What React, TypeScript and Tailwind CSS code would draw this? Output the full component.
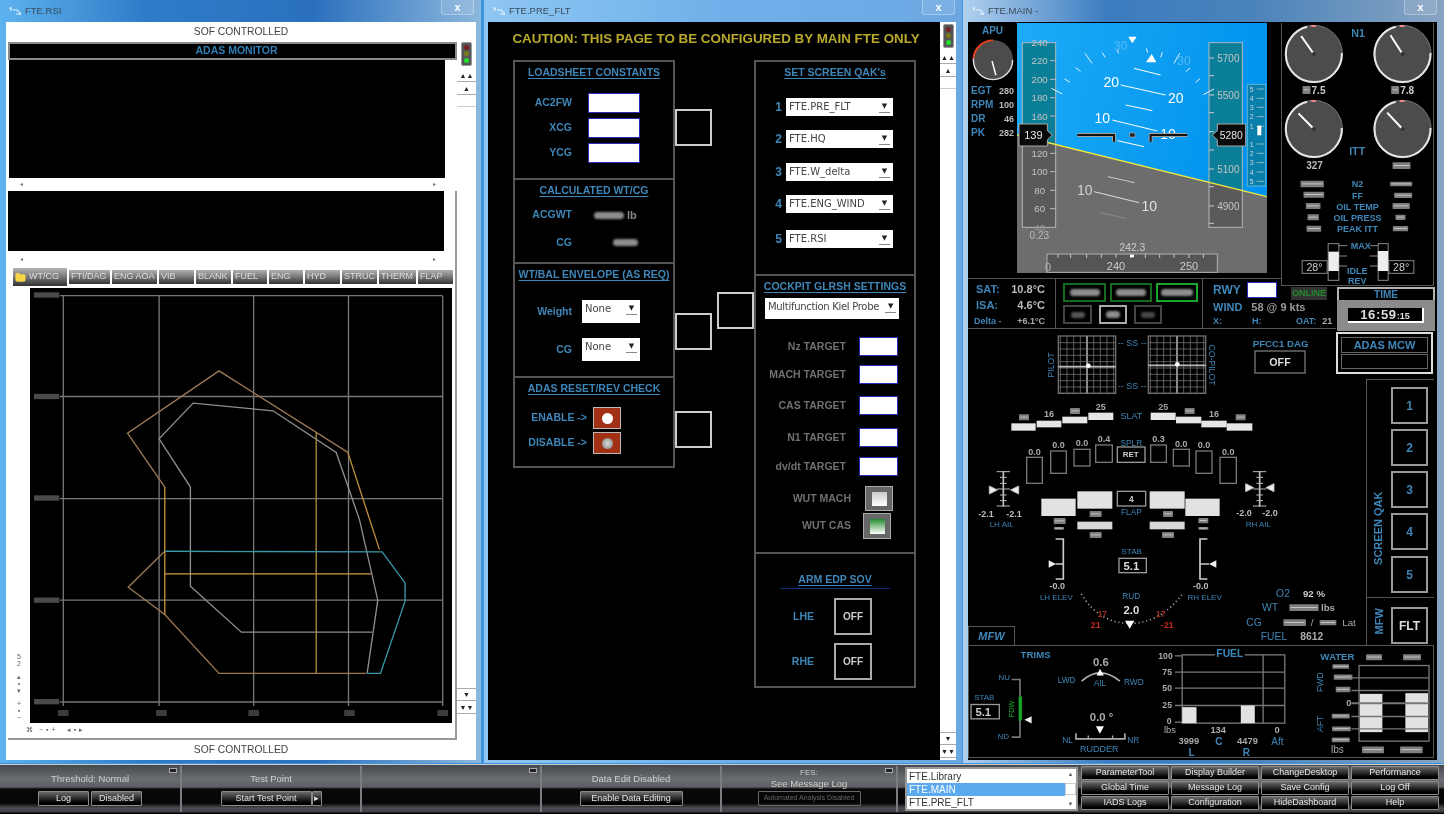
import { Folder } from "lucide-react";
import type { ReactNode } from "react";

const BLUE = "#3f86b8";

// text inside the instrument drawings, sizes are in the drawing's own units
const T = ({ x, y, s = 27, c = BLUE, a = "middle", b = false, r, children }: { x: number; y: number; s?: number; c?: string; a?: "start" | "middle" | "end"; b?: boolean; r?: number; children: ReactNode }) => (
  <text
    x={x}
    y={y}
    fontSize={s}
    fill={c}
    textAnchor={a}
    dominantBaseline="central"
    fontWeight={b ? 700 : 400}
    transform={r ? `rotate(${r} ${x} ${y})` : undefined}
  >
    {children}
  </text>
);

// the reference has these values smeared out
const Sm = ({ x, y, w = 60, h = 20, c = "#7e7e7e" }: { x: number; y: number; w?: number; h?: number; c?: string }) => (
  <g className="blur-[1.5px]">
    <rect x={x - w / 2} y={y - h / 2} width={w} height={h} rx={2} fill={c} />
    <rect x={x - w / 2 + 4} y={y - 2} width={w - 8} height={3} fill="#c4c4c4" />
  </g>
);

const Smudge = ({ className }: { className: string }) => <div className={`rounded-sm bg-[#8e8e8e] blur-[1px] ${className}`} />;

const Tri = ({ x, y, dir, s = 12 }: { x: number; y: number; dir: "l" | "r" | "d" | "u"; s?: number }) => {
  const pts = {
    r: `${x - s},${y - s} ${x + s},${y} ${x - s},${y + s}`,
    l: `${x + s},${y - s} ${x - s},${y} ${x + s},${y + s}`,
    d: `${x - s},${y - s} ${x + s},${y - s} ${x},${y + s}`,
    u: `${x - s},${y + s} ${x + s},${y + s} ${x},${y - s}`,
  }[dir];
  return <polygon points={pts} fill="#eee" />;
};

const WinIcon = () => (
  <svg viewBox="0 0 14 10" className="h-[10px] w-[14px] shrink-0" fill="none" stroke="#e8f2fb" strokeWidth="1.2">
    <path d="M1 2h3M3 2v3M5 4h4l2 2M8 8h5M12 6v3" />
  </svg>
);

const Win = ({ title, bar, width, children, pad }: { title: string; bar: string; width: string; pad: string; children: ReactNode }) => (
  <div className={`flex h-[763px] flex-col ${width} ${bar}`}>
    <div className="flex h-[22px] shrink-0 items-center pl-[8px] pr-[7px]">
      <WinIcon />
      <span className="ml-[3px] text-[9.5px] text-[#3a4a5a]">{title}</span>
      <div className="ml-auto flex h-[15px] w-[33px] items-center justify-center self-start rounded-b-[3px] border border-t-0 border-white/30 bg-white/10 text-[11px] font-bold leading-none text-white">
        x
      </div>
    </div>
    <div className={`flex h-[738px] ${pad}`}>{children}</div>
  </div>
);

const Light = () => (
  <div className="flex h-[24px] w-[11px] flex-col items-center justify-around rounded-[2px] border border-[#999] bg-[#555] py-px">
    <div className="h-[5px] w-[5px] rounded-full bg-[#7a1f1f]" />
    <div className="h-[5px] w-[5px] rounded-full bg-[#7a7a1a]" />
    <div className="h-[5px] w-[5px] rounded-full bg-[#22e02a]" />
  </div>
);

const Cap = ({ children, border = "border-b" }: { children: string; border?: string }) => (
  <div className={`flex h-[13px] w-full items-center justify-center border-[#aaa] text-[7px] leading-none text-[#222] ${border}`}>{children}</div>
);

const Scroll = ({ pt }: { pt: string }) => (
  <div className={`flex flex-1 flex-col items-center bg-white ${pt}`}>
    <Light />
    <div className="mt-[3px] w-full">
      <Cap>▲▲</Cap>
      <Cap>▲</Cap>
      <div className="h-[12px] border-b border-[#ccc]" />
    </div>
  </div>
);

const ScrollEnd = ({ className }: { className: string }) => (
  <div className={`w-full bg-white ${className}`}>
    <Cap border="border-y">▼</Cap>
    <Cap>▼▼</Cap>
  </div>
);

const TABS = [
  ["FTI/DAG", "w-[41px]"],
  ["ENG AOA", "w-[45px]"],
  ["VIB", "w-[35px]"],
  ["BLANK", "w-[35px]"],
  ["FUEL", "w-[34px]"],
  ["ENG", "w-[34px]"],
  ["HYD", "w-[35px]"],
  ["STRUC", "w-[35px]"],
  ["THERM", "w-[37px]"],
  ["FLAP", "w-[35px]"],
];

const EnvelopeChart = () => (
  <svg viewBox="90 85 1268 1305" className="h-[435px] w-[422px] bg-black" fill="none" strokeWidth="4">
    <g stroke="#777">
      {[190, 478, 762, 1047, 1330].map((x) => (
        <line key={x} x1={x} y1={107} x2={x} y2={1340} />
      ))}
      {[107, 410, 717, 1022, 1328].map((y) => (
        <line key={y} x1={180} y1={y} x2={1330} y2={y} />
      ))}
    </g>
    <polyline stroke="#8f8f8f" points="1103,1242 1135,1022 1080,780 1010,578 820,453 580,430 478,537 572,682 572,980 725,1118 1118,1118" />
    <polyline stroke="#9b7a52" points="1100,1242 658,1242 495,1065 385,983 495,875" />
    <polyline stroke="#9b7a52" points="495,682 383,520 658,333 1045,578" />
    <polyline stroke="#c08d3e" points="1045,578 1140,870" />
    <line stroke="#c79440" x1={495} y1={682} x2={495} y2={1065} />
    <line stroke="#d09a45" x1={495} y1={943} x2={1115} y2={943} />
    <line stroke="#a98c42" x1={950} y1={520} x2={950} y2={1242} />
    <polyline stroke="#3a97a8" points="495,875 1148,877 1217,970 1217,1025 1143,1242 1103,1242" />
    {[105, 410, 715, 1022, 1327].map((y) => (
      <rect key={y} x={102} y={y - 8} width={76} height={16} fill="#4a4a4a" className="blur-[2px]" />
    ))}
    {[190, 485, 762, 1050, 1330].map((x) => (
      <rect key={x} x={x - 16} y={1352} width={32} height={18} fill="#3c3c3c" className="blur-[2px]" />
    ))}
  </svg>
);

const RsiWindow = () => (
  <div className="flex w-full flex-col bg-white">
    <div className="flex h-[18px] items-center justify-center pt-px text-[10.3px] text-[#444]">SOF CONTROLLED</div>
    <div className="flex h-[700px]">
      <div className="ml-[2px] flex w-[449px] flex-col">
        <div className="mt-[2px] flex h-[18px] items-center justify-center border-2 border-[#8a8a8a] bg-black pl-[8px] text-[10.5px] font-bold text-[#2f7fb5]">ADAS MONITOR</div>
        <div className="ml-px h-[118px] w-[436px] bg-black" />
        <div className="flex h-[13px] w-[440px] items-center justify-between px-[12px] text-[6px] text-[#777]">
          <span>◂</span>
          <span>▸</span>
        </div>
        <div className="flex h-[549px] flex-col border-b-2 border-r-2 border-[#999]">
          <div className="h-[60px] w-[436px] bg-black" />
          <div className="flex h-[17px] w-[440px] items-center justify-between px-[12px] text-[6px] text-[#777]">
            <span>◂</span>
            <span>▸</span>
          </div>
          <div className="ml-[5px] flex h-[18px] items-end gap-[2px] text-[9px] text-[#ddd]">
            <div className="flex h-[18px] w-[54px] items-center gap-[3px] bg-gradient-to-b from-[#b5b5b5] via-[#777] to-[#333] pl-[2px]">
              <Folder size={11} fill="#f5d547" stroke="#f5d547" />
              WT/CG
            </div>
            {TABS.map(([name, w]) => (
              <div key={name} className={`mb-[2px] flex h-[14px] ${w} items-center bg-gradient-to-b from-[#b0b0b0] via-[#777] to-[#333] pl-[2px]`}>
                {name}
              </div>
            ))}
          </div>
          <div className="mt-[2px] flex h-[435px]">
            <div className="flex w-[22px] flex-col items-center justify-end pb-[2px] text-[7px] leading-[7px] text-[#666]">
              <span>5</span>
              <span>2</span>
              <span className="mt-[6px]">▴</span>
              <span>▪</span>
              <span>▾</span>
              <span className="mt-[6px]">+</span>
              <span>▪</span>
              <span>−</span>
            </div>
            <EnvelopeChart />
          </div>
          <div className="flex h-[15px] items-center gap-[3px] pl-[18px] text-[7px] text-[#666]">
            <span>⌘</span>
            <span className="ml-[3px]">−</span>
            <span>▪</span>
            <span>+</span>
            <span className="ml-[8px]">◂</span>
            <span>▪</span>
            <span>▸</span>
          </div>
        </div>
      </div>
      <div className="relative flex flex-1 flex-col pt-[2px]">
        <Scroll pt="pt-0" />
        <ScrollEnd className="mb-[26px]" />
      </div>
    </div>
    <div className="flex h-[20px] items-center justify-center text-[10.3px] text-[#444]">SOF CONTROLLED</div>
  </div>
);

const Head = ({ children }: { children: string }) => (
  <div className="whitespace-nowrap text-center text-[10.5px] font-bold leading-[20px] text-[#3f86b8] underline underline-offset-2">{children}</div>
);

const Input = ({ className = "w-[52px] h-[20px]" }: { className?: string }) => <div className={`border border-[#2b2bb8] bg-white ${className}`} />;

const Select = ({ text, className }: { text: string; className: string }) => (
  <div className={`flex items-start bg-white pl-[3px] pt-[2px] font-['DejaVu_Sans',sans-serif] text-[10px] leading-[14px] text-[#444] ${className}`}>
    <span className="whitespace-nowrap">{text}</span>
    <span className="ml-auto mr-[3px] mt-[1px] w-[11px] border-b border-[#888] text-center text-[7px] leading-[11px] text-[#222]">▼</span>
  </div>
);

const Sq = ({ className }: { className: string }) => <div className={`h-[37px] w-[37px] border-2 border-[#ccc] bg-black ${className}`} />;

const Label = ({ className, children }: { className: string; children: string }) => <div className={`whitespace-nowrap text-right text-[10.5px] font-bold ${className}`}>{children}</div>;

const RedBtn = ({ dot }: { dot: string }) => (
  <div className="flex h-[22px] w-[28px] items-center justify-center border border-[#bbb] bg-[#a23014]">
    <div className={`h-[11px] w-[11px] rounded-full ${dot}`} />
  </div>
);

const QAK_SELECTS = [
  ["1", "FTE.PRE_FLT", "mt-[16px]"],
  ["2", "FTE.HQ", "mt-[14px]"],
  ["3", "FTE.W_delta", "mt-[15px]"],
  ["4", "FTE.ENG_WIND", "mt-[14px]"],
  ["5", "FTE.RSI", "mt-[17px]"],
];

const TARGETS = [
  ["Nz TARGET", "mt-[18px]"],
  ["MACH TARGET", "mt-[9px]"],
  ["CAS TARGET", "mt-[12px]"],
  ["N1 TARGET", "mt-[13px]"],
  ["dv/dt TARGET", "mt-[10px]"],
];

const PreFltWindow = () => (
  <div className="flex w-full">
    <div className="w-[452px] bg-black pl-[25px]">
      <div className="flex h-[38px] items-start justify-center whitespace-nowrap pr-[21px] pt-[9px] text-[13.4px] font-bold leading-[16px] text-[#b8a92c]">CAUTION: THIS PAGE TO BE CONFIGURED BY MAIN FTE ONLY</div>
      <div className="flex">
        <div className="h-[408px] w-[162px] border-2 border-[#555]">
          <div className="h-[118px] border-b-2 border-[#555]">
            <Head>LOADSHEET CONSTANTS</Head>
            <div className="mt-[11px] flex flex-col gap-[5px]">
              {["AC2FW", "XCG", "YCG"].map((l) => (
                <div key={l} className="flex items-center">
                  <Label className="w-[57px] text-[#3f86b8]">{l}</Label>
                  <Input className="ml-[16px] h-[20px] w-[52px]" />
                </div>
              ))}
            </div>
          </div>
          <div className="h-[84px] border-b-2 border-[#555]">
            <Head>CALCULATED WT/CG</Head>
            <div className="mt-[7px] flex items-center">
              <Label className="w-[57px] text-[#3f86b8]">ACGWT</Label>
              <Smudge className="ml-[22px] h-[7px] w-[30px]" />
              <span className="ml-[3px] text-[11px] font-bold text-[#888]">lb</span>
            </div>
            <div className="mt-[11px] flex items-center">
              <Label className="w-[57px] text-[#3f86b8]">CG</Label>
              <Smudge className="ml-[41px] h-[7px] w-[25px]" />
            </div>
          </div>
          <div className="h-[114px] border-b-2 border-[#555]">
            <Head>WT/BAL ENVELOPE (AS REQ)</Head>
            <div className="mt-[16px] flex items-center">
              <Label className="w-[57px] text-[#3f86b8]">Weight</Label>
              <Select text="None" className="ml-[10px] h-[23px] w-[58px]" />
            </div>
            <div className="mt-[15px] flex items-center">
              <Label className="w-[57px] text-[#3f86b8]">CG</Label>
              <Select text="None" className="ml-[10px] h-[23px] w-[58px]" />
            </div>
          </div>
          <div>
            <Head>ADAS RESET/REV CHECK</Head>
            <div className="mt-[9px] flex items-center">
              <Label className="w-[72px] text-[#3f86b8]">{"ENABLE ->"}</Label>
              <div className="ml-[6px]">
                <RedBtn dot="bg-white" />
              </div>
            </div>
            <div className="mt-[3px] flex items-center">
              <Label className="w-[72px] text-[#3f86b8]">{"DISABLE ->"}</Label>
              <div className="ml-[6px]">
                <RedBtn dot="bg-[radial-gradient(circle,#ddd,#777)]" />
              </div>
            </div>
          </div>
        </div>
        <div className="w-[37px]">
          <Sq className="mt-[49px]" />
          <Sq className="mt-[167px]" />
          <Sq className="mt-[61px]" />
        </div>
        <div className="ml-[5px] w-[37px]">
          <Sq className="mt-[232px]" />
        </div>
        <div className="h-[628px] w-[162px] border-2 border-[#555]">
          <div className="h-[214px] border-b-2 border-[#555]">
            <Head>SET SCREEN QAK's</Head>
            {QAK_SELECTS.map(([n, s, mt]) => (
              <div key={n} className={`flex items-center ${mt}`}>
                <span className="w-[26px] text-right text-[12px] font-bold text-[#3f86b8]">{n}</span>
                <Select text={s} className="ml-[4px] h-[18px] w-[107px]" />
              </div>
            ))}
          </div>
          <div className="h-[278px] border-b-2 border-[#555]">
            <Head>COCKPIT GLRSH SETTINGS</Head>
            <Select text="Multifunction Kiel Probe" className="ml-[9px] mt-[2px] h-[21px] w-[134px] tracking-[-0.3px]" />
            {TARGETS.map(([l, mt]) => (
              <div key={l} className={`flex items-center ${mt}`}>
                <Label className="w-[90px] text-[#707070]">{l}</Label>
                <Input className="ml-[13px] h-[19px] w-[39px]" />
              </div>
            ))}
            <div className="mt-[10px] flex items-center">
              <Label className="w-[95px] text-[#707070]">WUT MACH</Label>
              <div className="ml-[14px] flex h-[25px] w-[28px] items-center justify-center border border-[#aaa] bg-[#666]">
                <div className="h-[14px] w-[15px] bg-gradient-to-b from-[#ccc] to-white" />
              </div>
            </div>
            <div className="mt-[2px] flex items-center">
              <Label className="w-[95px] text-[#707070]">WUT CAS</Label>
              <div className="ml-[12px] flex h-[26px] w-[28px] items-center justify-center border border-[#aaa] bg-[#666]">
                <div className="h-[15px] w-[15px] bg-gradient-to-b from-[#0f8a2c] to-white" />
              </div>
            </div>
          </div>
          <div>
            <div className="mt-[15px] text-center text-[10.5px] font-bold leading-[20px] text-[#3f86b8] underline underline-offset-2">ARM EDP SOV</div>
            <div className="mx-auto mt-[-1px] h-px w-[110px] bg-[#12307a]" />
            <div className="mt-[9px] flex items-center">
              <Label className="w-[58px] text-[#3f86b8]">LHE</Label>
              <div className="ml-[20px] flex h-[37px] w-[38px] items-center justify-center border-2 border-[#aaa] text-[10px] font-bold text-[#ccc]">OFF</div>
            </div>
            <div className="mt-[8px] flex items-center">
              <Label className="w-[58px] text-[#3f86b8]">RHE</Label>
              <div className="ml-[20px] flex h-[37px] w-[38px] items-center justify-center border-2 border-[#aaa] text-[10px] font-bold text-[#ccc]">OFF</div>
            </div>
          </div>
        </div>
      </div>
    </div>
    <div className="flex flex-1 flex-col bg-white">
      <div className="flex flex-1 flex-col pt-[2px]">
        <Scroll pt="pt-0" />
      </div>
      <ScrollEnd className="mb-[2px]" />
    </div>
  </div>
);

const SPEED = [
  [182, "220"],
  [238, "200"],
  [293, "180"],
  [348, "160"],
  [460, "120"],
  [515, "100"],
  [571, "80"],
  [626, "60"],
];

const ALT = [
  [174, "5700"],
  [285, "5500"],
  [507, "5100"],
  [618, "4900"],
];

const BANK = [
  "262,265 295,282",
  "302,237 318,247",
  "335,203 350,214",
  "363,160 384,190",
  "415,158 424,172",
  "460,147 463,160",
  "547,145 551,158",
  "595,157 590,172",
  "647,160 630,190",
  "678,204 665,215",
  "708,236 695,247",
  "750,267 718,284",
];

const PITCH: [string, string][] = [
  ["510,205 590,225", "#fff"],
  ["470,255 605,285", "#fff"],
  ["485,315 565,332", "#fff"],
  ["445,360 580,393", "#fff"],
  ["460,422 540,440", "#fff"],
  ["432,530 512,548", "#c9c9c9"],
  ["390,575 525,608", "#ddd"],
  ["410,638 485,655", "#8a8a8a"],
];

const Pfd = () => (
  <svg viewBox="159 69 750 750" className="h-[250px] w-[250px] shrink-0">
    <defs>
      <linearGradient id="sky" x1="0" y1="0" x2="1" y2="0.3">
        <stop offset="0" stopColor="#1dabf6" />
        <stop offset="1" stopColor="#0093ee" />
      </linearGradient>
    </defs>
    <rect x="159" y="69" width="750" height="750" fill="url(#sky)" />
    <polygon points="159,405 909,590 909,819 159,819" fill="#6d6d6d" />
    <polygon points="175,128 275,128 275,433 175,409" fill="#0b7f98" />
    <polygon points="175,409 275,433 275,682 175,682" fill="#5a5a5a" />
    <polygon points="735,128 835,128 835,571 735,547" fill="#0b7f98" />
    <polygon points="735,547 835,571 835,682 735,682" fill="#5a5a5a" />
    <rect x="175" y="128" width="100" height="554" fill="none" stroke="#aeb8bb" strokeWidth="3" />
    <rect x="735" y="128" width="100" height="554" fill="none" stroke="#aeb8bb" strokeWidth="3" />
    {SPEED.map(([y, t]) => (
      <g key={t}>
        <line x1={258} x2={275} y1={y as number} y2={y as number} stroke="#bbb" strokeWidth="3" />
        <T x={227} y={y as number} s={29} c="#c4c4c4">
          {t}
        </T>
      </g>
    ))}
    <T x={227} y={126} s={29} c="#c4c4c4">
      240
    </T>
    <T x={227} y={681} s={29} c="#999">
      40
    </T>
    {[174, 227, 285, 338, 395, 450, 507, 560, 618, 670].map((y) => (
      <line key={y} x1={735} x2={750} y1={y} y2={y} stroke="#ccc" strokeWidth="3" />
    ))}
    {ALT.map(([y, t]) => (
      <T key={t} x={793} y={y as number} s={30} c="#c4c4c4">
        {t}
      </T>
    ))}
    <rect x="850" y="253" width="55" height="305" fill="#0a7fac" stroke="#62b4d4" strokeWidth="3" />
    {[[267, "5"], [295, "4"], [322, "3"], [350, "2"], [379, "1"], [432, "1"], [460, "2"], [488, "3"], [516, "4"], [544, "5"]].map(([y, t]) => (
      <g key={`${y}`}>
        <T x={863} y={y as number} s={21} c="#c7d6dc">
          {t}
        </T>
        <line x1={878} x2={900} y1={y as number} y2={y as number} stroke="#c7d6dc" strokeWidth="2" />
      </g>
    ))}
    <rect x="880" y="377" width="12" height="29" fill="#fff" />
    {BANK.map((p) => (
      <polyline key={p} points={p} stroke="#e8f4fb" strokeWidth="3" fill="none" />
    ))}
    <T x={470} y={137} s={36} c="#56baf5">
      30
    </T>
    <T x={660} y={183} s={36} c="#56baf5">
      30
    </T>
    <polygon points="493,110 518,110 505,130" fill="#fff" />
    <polygon points="563,162 577,187 546,187" fill="#fff" />
    {PITCH.map(([p, c]) => (
      <polyline key={p} points={p} stroke={c} strokeWidth="3" fill="none" />
    ))}
    <T x={442} y={247} s={42} c="#fff">
      20
    </T>
    <T x={635} y={295} s={42} c="#fff">
      20
    </T>
    <T x={415} y={355} s={42} c="#fff">
      10
    </T>
    <T x={612} y={403} s={42} c="#fff">
      10
    </T>
    <T x={362} y={569} s={42} c="#d0d0d0">
      10
    </T>
    <T x={556} y={618} s={42} c="#e0e0e0">
      10
    </T>
    <line x1="159" y1="405" x2="909" y2="590" stroke="#f2e83c" strokeWidth="4" />
    <polyline points="340,405 450,405 450,425" fill="none" stroke="#a0a0a0" strokeWidth="12" />
    <polyline points="340,405 450,405 450,425" fill="none" stroke="#111" strokeWidth="6" />
    <polyline points="560,425 560,405 670,405" fill="none" stroke="#a0a0a0" strokeWidth="12" />
    <polyline points="560,425 560,405 670,405" fill="none" stroke="#111" strokeWidth="6" />
    <rect x="497" y="399" width="16" height="12" fill="#222" stroke="#aaa" strokeWidth="2" />
    <polygon points="165,372 250,372 250,392 265,405 250,420 250,438 165,438" fill="#0a0a0a" stroke="#aaa" strokeWidth="3" />
    <T x={208} y={406} s={33} c="#e8e8e8">
      139
    </T>
    <polygon points="845,372 760,372 760,392 745,405 760,420 760,438 845,438" fill="#0a0a0a" stroke="#aaa" strokeWidth="3" />
    <T x={802} y={406} s={31} c="#e8e8e8">
      5280
    </T>
    <T x={226} y={707} s={30} c="#bbb">
      0.23
    </T>
    <T x={505} y={742} s={31} c="#ccc">
      242.3
    </T>
    <rect x="249" y="762" width="511" height="55" fill="#555" stroke="#b0b0b0" strokeWidth="3" />
    {[282, 320, 368, 412, 456, 500, 544, 587, 630, 675, 718].map((x) => (
      <line key={x} x1={x} x2={x} y1={762} y2={774} stroke="#c5c5c5" strokeWidth="3" />
    ))}
    <rect x="498" y="764" width="12" height="8" fill="#fff" />
    <T x={252} y={800} s={33} c="#bbb">
      0
    </T>
    <T x={456} y={799} s={33} c="#ccc">
      240
    </T>
    <T x={675} y={799} s={33} c="#ccc">
      250
    </T>
  </svg>
);

const Gauge = ({ cx, cy, nx, ny }: { cx: number; cy: number; nx: number; ny: number }) => (
  <g>
    <circle cx={cx} cy={cy} r={86} fill="#4c4c4c" />
    <circle cx={cx} cy={cy} r={86} fill="none" stroke="#999" strokeWidth="2" />
    <circle cx={cx} cy={cy} r={84} fill="none" stroke="#e6e6e6" strokeWidth="6" pathLength={360} strokeDasharray="258 102" transform={`rotate(-2 ${cx} ${cy})`} />
    <line x1={cx - 8} x2={cx + 6} y1={cy - 84} y2={cy - 84} stroke="#e88" strokeWidth="6" />
    <line x1={cx} y1={cy} x2={nx} y2={ny} stroke="#fff" strokeWidth="6" />
    <circle cx={cx} cy={cy} r={6} fill="#333" />
  </g>
);

const ENGINE_ROWS: [number, string][] = [
  [553, "N2"],
  [587, "FF"],
  [620, "OIL TEMP"],
  [654, "OIL PRESS"],
  [688, "PEAK ITT"],
];

const EngineCluster = () => (
  <svg viewBox="955 69 455 789" className="h-[263px] w-[152px]">
    <Gauge cx={1050} cy={162} nx={1012} ny={108} />
    <Gauge cx={1316} cy={162} nx={1280} ny={106} />
    <Gauge cx={1050} cy={387} nx={1004} ny={340} />
    <Gauge cx={1316} cy={387} nx={1270} ny={338} />
    <T x={1183} y={98} s={32} b>
      N1
    </T>
    <T x={1180} y={452} s={32} b>
      ITT
    </T>
    <Sm x={1028} y={270} w={24} h={24} />
    <T x={1064} y={270} s={30} c="#ccc" b>
      7.5
    </T>
    <Sm x={1294} y={270} w={24} h={24} />
    <T x={1330} y={270} s={30} c="#ccc" b>
      7.8
    </T>
    <T x={1052} y={497} s={30} c="#bbb" b>
      327
    </T>
    <Sm x={1313} y={497} w={54} h={20} />
    {ENGINE_ROWS.map(([y, t]) => (
      <T key={t} x={1181} y={y} s={27} b>
        {t}
      </T>
    ))}
    <Sm x={1045} y={552} w={70} h={20} />
    <Sm x={1050} y={584} w={62} h={18} />
    <Sm x={1048} y={618} w={44} h={18} />
    <Sm x={1048} y={652} w={34} h={18} />
    <Sm x={1050} y={686} w={44} h={18} />
    <Sm x={1312} y={552} w={66} h={14} />
    <Sm x={1318} y={586} w={54} h={16} />
    <Sm x={1312} y={618} w={52} h={18} />
    <Sm x={1310} y={652} w={30} h={16} />
    <Sm x={1310} y={686} w={46} h={16} />
    <g fill="none" stroke="#888" strokeWidth="3">
      <rect x="1093" y="731" width="32" height="110" />
      <rect x="1243" y="731" width="30" height="110" />
      <rect x="1015" y="782" width="75" height="38" />
      <rect x="1275" y="782" width="75" height="38" />
      <line x1="1125" x2="1150" y1="737" y2="737" />
      <line x1="1125" x2="1150" y1="768" y2="768" />
      <line x1="1125" x2="1150" y1="798" y2="798" />
      <line x1="1218" x2="1243" y1="737" y2="737" />
      <line x1="1218" x2="1243" y1="768" y2="768" />
      <line x1="1218" x2="1243" y1="798" y2="798" />
    </g>
    <rect x="1094" y="755" width="31" height="58" fill="#eee" />
    <rect x="1242" y="753" width="31" height="60" fill="#eee" />
    <T x={1052} y={802} s={32} c="#ccc">
      28°
    </T>
    <T x={1312} y={802} s={32} c="#ccc">
      28°
    </T>
    <T x={1191} y={737} s={27} b>
      MAX
    </T>
    <T x={1180} y={812} s={27} b>
      IDLE
    </T>
    <T x={1180} y={842} s={27} b>
      REV
    </T>
  </svg>
);

const GRID_TICKS = [0, 1, 2, 3, 4, 5, 6, 7, 8];

const StickGrid = ({ x, dotX, dotY }: { x: number; dotX: number; dotY: number }) => (
  <g stroke="#6e6e6e" strokeWidth="2.5" fill="none">
    <rect x={x} y={198} width={172} height={172} strokeWidth="4" />
    {GRID_TICKS.map((i) => (
      <g key={i}>
        <line x1={x + 20 * i + 6} x2={x + 20 * i + 6} y1={198} y2={370} />
        <line x1={x} x2={x + 172} y1={218 + 19 * i} y2={218 + 19 * i} />
      </g>
    ))}
    <line x1={x + 86} x2={x + 86} y1={198} y2={370} strokeWidth="6" stroke="#8a8a8a" />
    <line x1={x} x2={x + 172} y1={dotY + 3} y2={dotY + 3} strokeWidth="5" stroke="#bbb" />
    <circle cx={dotX} cy={dotY} r={7} fill="#fff" stroke="none" />
  </g>
);

const SLATS = [
  [142, 460, 73, 22],
  [218, 452, 74, 20],
  [295, 440, 75, 20],
  [373, 428, 75, 22],
  [560, 428, 75, 22],
  [636, 440, 76, 20],
  [712, 452, 76, 20],
  [788, 460, 77, 22],
];

const SPOILERS = [
  [188, 562, 47, 78, "0.0", 545],
  [260, 543, 47, 67, "0.0", 525],
  [330, 538, 48, 50, "0.0", 520],
  [395, 525, 50, 52, "0.4", 508],
  [560, 525, 47, 52, "0.3", 507],
  [628, 538, 48, 50, "0.0", 522],
  [696, 543, 48, 67, "0.0", 526],
  [768, 562, 49, 78, "0.0", 545],
];

const AilScale = ({ x, tl, tr, y }: { x: number; tl: number; tr: number; y: number }) => (
  <g stroke="#bdbdbd" strokeWidth="3">
    <line x1={x} x2={x} y1={603} y2={710} strokeWidth="5" />
    {[605, 622, 640, 657, 675, 692, 708].map((ty, i) => (
      <line key={ty} x1={x - (i % 3 === 0 ? 20 : 10)} x2={x + (i % 3 === 0 ? 20 : 10)} y1={ty} y2={ty} />
    ))}
    <Tri x={tl} y={y} dir="r" />
    <Tri x={tr} y={y} dir="l" />
  </g>
);

const Synoptic = () => (
  <svg viewBox="968 329 398 316" className="h-[316px] w-[398px] shrink-0">
    <g transform="translate(964 270) scale(0.33333)">
      <StickGrid x={283} dotX={373} dotY={287} />
      <StickGrid x={553} dotX={640} dotY={283} />
      <T x={505} y={218} s={27}>
        -- SS --
      </T>
      <T x={505} y={347} s={27}>
        -- SS --
      </T>
      <T x={262} y={285} s={26} r={-90}>
        PILOT
      </T>
      <T x={745} y={285} s={26} r={90}>
        CO-PILOT
      </T>
      <T x={950} y={220} s={29} b>
        PFCC1 DAG
      </T>
      <rect x="873" y="243" width="150" height="66" fill="none" stroke="#777" strokeWidth="4" />
      <T x={948} y={276} s={32} c="#ddd" b>
        OFF
      </T>
      {SLATS.map(([x, y, w, h]) => (
        <rect key={x} x={x} y={y} width={w} height={h} fill="#e6e6e6" />
      ))}
      <Sm x={180} y={442} w={30} h={18} />
      <T x={255} y={433} s={27} c="#aaa" b>
        16
      </T>
      <Sm x={333} y={423} w={30} h={18} />
      <T x={410} y={410} s={27} c="#aaa" b>
        25
      </T>
      <T x={598} y={412} s={27} c="#999" b>
        25
      </T>
      <Sm x={677} y={423} w={30} h={18} />
      <T x={750} y={432} s={27} c="#aaa" b>
        16
      </T>
      <Sm x={830} y={442} w={30} h={18} />
      <T x={502} y={437} s={27}>
        SLAT
      </T>
      {SPOILERS.map(([x, y, w, h, t, ty]) => (
        <g key={x as number}>
          <rect x={x as number} y={y as number} width={w as number} height={h as number} fill="none" stroke="#777" strokeWidth="4" />
          <T x={(x as number) + (w as number) / 2} y={ty as number} s={27} c="#aaa" b>
            {t}
          </T>
        </g>
      ))}
      <T x={502} y={518} s={25}>
        SPLR
      </T>
      <rect x="460" y="531" width="83" height="46" fill="none" stroke="#999" strokeWidth="4" />
      <T x={500} y={555} s={24} c="#ccc" b>
        RET
      </T>
      <AilScale x={118} tl={88} tr={152} y={660} />
      <AilScale x={887} tl={857} tr={918} y={653} />
      <T x={66} y={733} s={27} c="#bbb" b>
        -2.1
      </T>
      <T x={150} y={733} s={27} c="#bbb" b>
        -2.1
      </T>
      <T x={840} y={730} s={27} c="#bbb" b>
        -2.0
      </T>
      <T x={918} y={730} s={27} c="#bbb" b>
        -2.0
      </T>
      <T x={113} y={765} s={24}>
        LH AIL
      </T>
      <T x={883} y={763} s={24}>
        RH AIL
      </T>
      <rect x="232" y="686" width="103" height="52" fill="#e2e2e2" />
      <rect x="340" y="664" width="105" height="52" fill="#e2e2e2" />
      <rect x="557" y="664" width="105" height="52" fill="#e2e2e2" />
      <rect x="664" y="686" width="103" height="52" fill="#e2e2e2" />
      <rect x="460" y="664" width="85" height="44" fill="none" stroke="#999" strokeWidth="4" />
      <T x={502} y={686} s={25} c="#ccc" b>
        4
      </T>
      <T x={502} y={727} s={25}>
        FLAP
      </T>
      <Sm x={287} y={753} w={36} h={18} />
      <Sm x={395} y={732} w={36} h={18} />
      <Sm x={612} y={732} w={30} h={18} />
      <Sm x={718} y={752} w={30} h={16} />
      <rect x="340" y="755" width="105" height="23" fill="#d6d6d6" />
      <rect x="557" y="755" width="105" height="23" fill="#d6d6d6" />
      <Sm x={395} y={795} w={36} h={18} />
      <Sm x={612} y={795} w={36} h={18} />
    </g>
    <g transform="translate(964 530) scale(0.33333)">
      <Sm x={285} y={-5} w={30} h={8} />
      <Sm x={718} y={-5} w={30} h={8} />
      <T x={503} y={65} s={24}>
        STAB
      </T>
      <rect x="465" y="85" width="82" height="43" fill="none" stroke="#999" strokeWidth="4" />
      <T x={502} y={107} s={34} c="#ddd" b>
        5.1
      </T>
      <path d="M275,27H298V147H275M298,102H275" fill="none" stroke="#ccc" strokeWidth="5" />
      <Tri x={265} y={102} dir="r" s={11} />
      <path d="M730,27H708V147H730M708,102H735" fill="none" stroke="#ccc" strokeWidth="5" />
      <Tri x={746} y={102} dir="l" s={11} />
      <T x={280} y={168} s={27} c="#bbb" b>
        -0.0
      </T>
      <T x={710} y={168} s={27} c="#bbb" b>
        -0.0
      </T>
      <T x={277} y={203} s={24}>
        LH ELEV
      </T>
      <T x={722} y={203} s={24}>
        RH ELEV
      </T>
      <T x={502} y={198} s={25}>
        RUD
      </T>
      <T x={502} y={240} s={34} c="#ddd" b>
        2.0
      </T>
      <path d="M352,192 Q405,280 497,280 Q590,280 655,192" fill="none" stroke="#bbb" strokeWidth="5" strokeDasharray="3 9" />
      <T x={415} y={252} s={25} c="#a72a22" b>
        17
      </T>
      <T x={590} y={252} s={25} c="#a72a22" b>
        17
      </T>
      <T x={395} y={285} s={26} c="#c4281f" b>
        21
      </T>
      <T x={610} y={285} s={26} c="#c4281f" b>
        -21
      </T>
      <polygon points="483,272 511,272 497,296" fill="#fff" />
      <T x={957} y={190} s={31}>
        O2
      </T>
      <T x={1050} y={190} s={29} c="#ccc" b>
        92 %
      </T>
      <T x={918} y={233} s={31}>
        WT
      </T>
      <Sm x={1020} y={233} w={88} h={20} />
      <T x={1092} y={233} s={29} c="#aaa" b>
        lbs
      </T>
      <T x={870} y={278} s={31}>
        CG
      </T>
      <Sm x={992} y={278} w={68} h={20} />
      <T x={1044} y={278} s={29} c="#aaa">
        /
      </T>
      <Sm x={1092} y={278} w={50} h={16} />
      <T x={1155} y={278} s={29} c="#aaa">
        Lat
      </T>
      <T x={930} y={320} s={31}>
        FUEL
      </T>
      <T x={1043} y={320} s={31} c="#aaa" b>
        8612
      </T>
    </g>
  </svg>
);

const BottomBand = () => (
  <svg viewBox="12 347 1396 338" className="h-[113px] w-[465px]">
    <T x={212} y={373} s={29} b>
      TRIMS
    </T>
    <T x={58} y={500} s={24}>
      STAB
    </T>
    <rect x="18" y="522" width="85" height="43" fill="none" stroke="#999" strokeWidth="4" />
    <T x={55} y={545} s={34} c="#ccc" b>
      5.1
    </T>
    <polyline points="140,447 165,447 165,620 140,620" fill="none" stroke="#777" strokeWidth="5" />
    <rect x="161" y="498" width="10" height="72" fill="#17a62a" />
    <T x={140} y={535} s={22} c="#17a62a" r={-90}>
      FDW
    </T>
    <Tri x={189} y={568} dir="l" s={11} />
    <T x={118} y={440} s={24}>
      NU
    </T>
    <T x={115} y={618} s={24}>
      ND
    </T>
    <T x={408} y={393} s={34} c="#aaa" b>
      0.6
    </T>
    <path d="M350,452 Q405,402 465,452" fill="none" stroke="#aaa" strokeWidth="5" />
    <polygon points="395,435 417,435 405,415" fill="#fff" />
    <T x={305} y={448} s={25}>
      LWD
    </T>
    <T x={507} y={453} s={25}>
      RWD
    </T>
    <T x={405} y={458} s={25}>
      AIL
    </T>
    <T x={410} y={560} s={34} c="#aaa" b>
      0.0 °
    </T>
    <polygon points="393,587 417,587 405,610" fill="#fff" />
    <polyline points="333,608 333,625 480,625 480,608" fill="none" stroke="#aaa" strokeWidth="5" />
    <line x1="370" x2="370" y1="615" y2="625" stroke="#aaa" strokeWidth="4" />
    <line x1="443" x2="443" y1="615" y2="625" stroke="#aaa" strokeWidth="4" />
    <T x={308} y={628} s={25}>
      NL
    </T>
    <T x={505} y={628} s={25}>
      NR
    </T>
    <T x={403} y={655} s={27}>
      RUDDER
    </T>
    <g fill="none" stroke="#777" strokeWidth="4">
      <rect x="652" y="373" width="308" height="205" />
      <line x1="630" x2="960" y1="425" y2="425" />
      <line x1="630" x2="960" y1="473" y2="473" />
      <line x1="630" x2="960" y1="525" y2="525" />
      <line x1="895" x2="895" y1="373" y2="578" />
      <line x1="630" x2="652" y1="376" y2="376" />
      <line x1="630" x2="652" y1="575" y2="575" />
    </g>
    <rect x="750" y="360" width="90" height="26" fill="#000" />
    <T x={795} y={370} s={31} b>
      FUEL
    </T>
    <rect x="652" y="530" width="43" height="48" fill="#e2e2e2" />
    <rect x="828" y="525" width="42" height="53" fill="#e2e2e2" />
    {[[602, 376, "100"], [607, 424, "75"], [607, 473, "50"], [607, 523, "25"], [613, 573, "0"]].map(([x, y, t]) => (
      <T key={t} x={x as number} y={y as number} s={26} c="#aaa" b>
        {t}
      </T>
    ))}
    <T x={615} y={598} s={28} c="#aaa">
      lbs
    </T>
    <T x={760} y={598} s={28} c="#aaa" b>
      134
    </T>
    <T x={937} y={598} s={28} c="#aaa" b>
      0
    </T>
    <T x={672} y={632} s={28} c="#aaa" b>
      3999
    </T>
    <T x={762} y={632} s={30} b>
      C
    </T>
    <T x={848} y={632} s={28} c="#aaa" b>
      4479
    </T>
    <T x={938} y={632} s={30}>
      Aft
    </T>
    <T x={680} y={665} s={30} b>
      L
    </T>
    <T x={845} y={665} s={30} b>
      R
    </T>
    <T x={1118} y={377} s={29} b>
      WATER
    </T>
    <Sm x={1228} y={380} w={48} h={18} />
    <Sm x={1342} y={380} w={54} h={18} />
    <rect x="1185" y="490" width="68" height="115" fill="#e2e2e2" />
    <rect x="1322" y="488" width="68" height="117" fill="#e2e2e2" />
    <g fill="none" stroke="#777" strokeWidth="4">
      <rect x="1183" y="405" width="210" height="227" />
      <line x1="1160" x2="1393" y1="442" y2="442" />
      <line x1="1160" x2="1393" y1="480" y2="480" />
      <line x1="1160" x2="1393" y1="518" y2="518" strokeWidth="6" />
      <line x1="1160" x2="1393" y1="558" y2="558" />
      <line x1="1160" x2="1393" y1="595" y2="595" />
    </g>
    <Sm x={1128} y={408} w={50} h={14} />
    <Sm x={1135} y={440} w={56} h={16} />
    <Sm x={1135} y={477} w={44} h={16} />
    <T x={1152} y={517} s={28} c="#aaa" b>
      0
    </T>
    <Sm x={1128} y={557} w={54} h={14} />
    <Sm x={1130} y={595} w={56} h={14} />
    <Sm x={1128} y={628} w={54} h={14} />
    <T x={1065} y={455} s={26} r={-90}>
      FWD
    </T>
    <T x={1065} y={580} s={26} r={-90}>
      AFT
    </T>
    <T x={1118} y={658} s={30} c="#aaa">
      lbs
    </T>
    <Sm x={1225} y={658} w={66} h={20} />
    <Sm x={1340} y={658} w={68} h={20} />
  </svg>
);

const ModeBtn = ({ on, className, children }: { on: string; className: string; children: ReactNode }) => (
  <div className={`flex h-[19px] items-center justify-center border-2 ${on} ${className}`}>{children}</div>
);

const QakBtn = ({ children, className = "" }: { children: string; className?: string }) => (
  <div className={`flex h-[37px] w-[37px] items-center justify-center border-2 border-[#999] text-[12px] font-bold ${className}`}>{children}</div>
);

const MainWindow = () => (
  <div className="flex w-full flex-col bg-black pt-px">
    <div className="relative z-10 flex h-[255px]">
      <div className="w-[49px] text-[10px] font-bold">
        <div className="mt-[1px] text-center leading-[14px] text-[#3f86b8]">APU</div>
        <svg viewBox="0 0 46 46" className="ml-[3px] h-[44px] w-[44px]">
          <circle cx="23" cy="23" r="21" fill="#4c4c4c" />
          <circle cx="23" cy="23" r="20.5" fill="none" stroke="#ddd" strokeWidth="1.5" pathLength={360} strokeDasharray="185 175" />
          <circle cx="23" cy="23" r="20.5" fill="none" stroke="#e8401c" strokeWidth="2" pathLength={360} strokeDasharray="85 275" transform="rotate(185 23 23)" />
          <line x1="22" y1="24" x2="26" y2="39" stroke="#fff" strokeWidth="1.5" />
        </svg>
        <div className="mt-[2px] flex flex-col pl-[3px] pr-[3px] leading-[14px]">
          {[
            ["EGT", "280"],
            ["RPM", "100"],
            ["DR", "46"],
            ["PK", "282"],
          ].map(([l, v]) => (
            <div key={l} className="flex justify-between">
              <span className="text-[#3f86b8]">{l}</span>
              <span className="text-[9px] text-[#bbb]">{v}</span>
            </div>
          ))}
        </div>
      </div>
      <Pfd />
      <div className="ml-[14px] h-[263px] w-[153px] shrink-0 border-x border-b border-[#555] bg-black">
        <EngineCluster />
      </div>
    </div>
    <div className="flex h-[51px] text-[11px]">
      <div className="flex w-[368px] border-y border-[#555]">
        <div className="w-[88px] border-r border-[#555] pl-[8px] pt-[2px] font-bold leading-[16px]">
          <div className="flex justify-between pr-[10px]">
            <span className="text-[#3f86b8]">SAT:</span>
            <span className="text-[#bbb]">10.8°C</span>
          </div>
          <div className="flex justify-between pr-[10px]">
            <span className="text-[#3f86b8]">ISA:</span>
            <span className="text-[#bbb]">4.6°C</span>
          </div>
          <div className="-ml-[2px] flex justify-between pr-[10px] text-[9px]">
            <span className="text-[#3f86b8]">Delta -</span>
            <span className="text-[#aaa]">+6.1°C</span>
          </div>
        </div>
        <div className="w-[147px] border-r border-[#555] pl-[7px] pt-[4px]">
          <div className="flex gap-[4px]">
            <ModeBtn on="border-[#156b1f]" className="w-[43px]">
              <Smudge className="h-[7px] w-[30px]" />
            </ModeBtn>
            <ModeBtn on="border-[#156b1f]" className="w-[42px]">
              <Smudge className="h-[7px] w-[30px]" />
            </ModeBtn>
            <ModeBtn on="border-[#17a52a]" className="w-[42px]">
              <Smudge className="h-[7px] w-[32px]" />
            </ModeBtn>
          </div>
          <div className="mt-[3px] flex gap-[7px]">
            <ModeBtn on="border-[#444]" className="w-[29px]">
              <Smudge className="h-[6px] w-[14px] opacity-60" />
            </ModeBtn>
            <ModeBtn on="border-[#aaa]" className="w-[28px]">
              <Smudge className="h-[7px] w-[14px]" />
            </ModeBtn>
            <ModeBtn on="border-[#444]" className="w-[28px]">
              <Smudge className="h-[6px] w-[14px] opacity-50" />
            </ModeBtn>
          </div>
        </div>
        <div className="flex-1 pl-[10px] font-bold">
          <div className="flex h-[20px] items-center gap-[6px] pt-px">
            <span className="text-[12px] text-[#3f86b8]">RWY</span>
            <div className="h-[16px] w-[30px] border border-[#2b2bb8] bg-white" />
          </div>
          <div className="flex h-[16px] items-center gap-[9px]">
            <span className="text-[#3f86b8]">WIND</span>
            <span className="text-[#999]">58 @ 9 kts</span>
          </div>
          <div className="flex h-[14px] items-center text-[9px] text-[#3f86b8]">
            <span className="w-[39px]">X:</span>
            <span className="w-[44px]">H:</span>
            <span>OAT:</span>
            <span className="ml-[6px] text-[#aaa]">21</span>
          </div>
        </div>
      </div>
      <div className="ml-[-45px] mt-[9px] flex h-[13px] w-[36px] items-center justify-center bg-[#333] text-[9px] font-bold text-[#1f8a2a]">ONLINE</div>
      <div className="ml-[10px] mt-[9px] h-[44px] w-[98px] bg-[#8b8b8b]">
        <div className="border-x-2 border-t-2 border-white/70 bg-black text-center text-[10px] font-bold leading-[11px] text-[#3f86b8]">TIME</div>
        <div className="mx-[11px] mt-[8px] flex h-[15px] items-baseline justify-center border-b-2 border-r-2 border-white bg-black text-[13px] font-bold leading-[14px] tracking-wider text-[#ddd]">
          16:59
          <span className="text-[9px] tracking-normal">:15</span>
        </div>
      </div>
    </div>
    <div className="flex">
      <Synoptic />
      <div className="flex flex-col">
        <div className="relative z-10 -ml-[30px] mt-[3px] h-[42px] w-[97px] border-2 border-[#ddd] bg-black p-[3px]">
          <div className="flex h-[16px] items-center justify-center border border-[#666] text-[11px] font-bold text-[#3f86b8]">ADAS MCW</div>
          <div className="mt-px h-[15px] border border-[#666]" />
        </div>
        <div className="mt-[5px] flex h-[218px] w-[68px] border-l border-t border-[#555]">
          <div className="flex w-[24px] items-center justify-center pt-[80px]">
            <span className="-rotate-90 whitespace-nowrap text-[11px] font-bold text-[#3f86b8]">SCREEN QAK</span>
          </div>
          <div className="flex flex-col gap-[5px] pt-[7px]">
            <QakBtn className="text-[#3f86b8]">1</QakBtn>
            <QakBtn className="text-[#3f86b8]">2</QakBtn>
            <QakBtn className="text-[#3f86b8]">3</QakBtn>
            <QakBtn className="text-[#3f86b8]">4</QakBtn>
            <QakBtn className="mt-px text-[#3f86b8]">5</QakBtn>
          </div>
        </div>
        <div className="flex h-[48px] w-[68px] border-l border-t border-[#555]">
          <div className="flex w-[24px] items-center justify-center">
            <span className="-rotate-90 text-[11px] font-bold text-[#3f86b8]">MFW</span>
          </div>
          <QakBtn className="mt-[9px] text-[#ddd]">FLT</QakBtn>
        </div>
      </div>
    </div>
    <div className="-mt-[19px] flex h-[19px] w-[47px] items-center justify-center border border-b-0 border-[#555] text-[11px] font-bold italic text-[#3f86b8]">MFW</div>
    <div className="h-[113px] w-[466px] border border-[#555]">
      <BottomBand />
    </div>
  </div>
);

const DashBtn = ({ className, children }: { className: string; children: string }) => (
  <div className={`flex h-[15px] items-center justify-center rounded-[1px] border border-[#8a8a8a] bg-gradient-to-b from-[#6c6c6c] via-[#2a2a2a] to-black text-[9px] text-[#e4e4e4] ${className}`}>{children}</div>
);

const Corner = () => <div className="absolute right-[3px] top-[2px] h-[5px] w-[8px] border border-[#aaa] bg-[#222]" />;

const DashSection = ({ title, corner, children, width }: { title: ReactNode; corner?: boolean; width: string; children?: ReactNode }) => (
  <div className={`relative flex h-[46px] flex-col border-r-2 border-[#7b7d80] ${width}`}>
    {corner && <Corner />}
    <div className="flex h-[22px] flex-col items-center justify-center pt-[2px] text-[9.5px] leading-[11px] text-[#cfcfcf]">{title}</div>
    <div className="mt-[3px] flex h-[15px] justify-center gap-[2px]">{children}</div>
  </div>
);

const TOOL_BTNS = ["ParameterTool", "Display Builder", "ChangeDesktop", "Performance", "Global Time", "Message Log", "Save Config", "Log Off", "IADS Logs", "Configuration", "HideDashboard", "Help"];

const Dashboard = () => (
  <div className="flex h-[50px] border-t border-white/80 bg-[linear-gradient(to_bottom,#45494e_0,#6a6d72_14px,#5c5f64_22px,#090909_24px,#050505_38px,#4a4d52_43px,#3e4044_47px,#000_48px)] pt-[1px]">
    <DashSection title="Threshold: Normal" corner width="w-[182px]">
      <DashBtn className="w-[51px]">Log</DashBtn>
      <DashBtn className="w-[51px]">Disabled</DashBtn>
    </DashSection>
    <DashSection title="Test Point" width="w-[180px]">
      <div className="flex">
        <DashBtn className="w-[91px]">Start Test Point</DashBtn>
        <DashBtn className="w-[10px] text-[6px]">▸</DashBtn>
      </div>
    </DashSection>
    <DashSection title="" corner width="w-[180px]" />
    <DashSection title="Data Edit Disabled" width="w-[180px]">
      <DashBtn className="w-[103px]">Enable Data Editing</DashBtn>
    </DashSection>
    <DashSection title={<><span className="text-[8px]">FES:</span><span>See Message Log</span></>} corner width="w-[176px]">
      <div className="flex h-[15px] w-[103px] items-center justify-center rounded-[1px] border border-[#666] text-[7px] text-[#666]">Automated Analysis Disabled</div>
    </DashSection>
    <div className="ml-[7px] mt-[1px] flex h-[44px] w-[173px] border-2 border-[#999] bg-white text-[10px] text-[#333]">
      <div className="w-[158px] leading-[13px]">
        <div className="pl-[2px] pt-[1px]">FTE.Library</div>
        <div className="bg-[#5ba9ee] pl-[2px] text-white">FTE.MAIN</div>
        <div className="pl-[2px]">FTE.PRE_FLT</div>
      </div>
      <div className="flex flex-1 flex-col items-center justify-between py-[2px] text-[6px] leading-none text-[#666]">
        <span>▲</span>
        <div className="h-[12px] w-full border border-[#ccc]" />
        <span>▼</span>
      </div>
    </div>
    <div className="ml-[3px] grid h-[44px] w-[358px] grid-cols-4 gap-x-[2px] gap-y-[1px]">
      {TOOL_BTNS.map((b) => (
        <DashBtn key={b} className="!h-[14px] text-[#cfcfcf]">
          {b}
        </DashBtn>
      ))}
    </div>
  </div>
);

export default function App() {
  return (
    <div className="flex h-[814px] w-[1444px] flex-col overflow-hidden bg-[#3d94de] font-['Liberation_Sans',sans-serif] blur-[0.4px]">
      <div className="flex h-[764px]">
        <Win title="FTE.RSI" width="w-[481px]" pad="pl-[6px] pr-[5px]" bar="bg-[linear-gradient(to_right,#5db2ee,#2f7cc8_30%,#2a70bd_65%,#8cb7dd)]">
          <RsiWindow />
        </Win>
        <Win title="FTE.PRE_FLT" width="ml-[3px] w-[478px]" pad="pl-[4px] pr-[6px]" bar="bg-[linear-gradient(to_right,#8ec6f2,#6fb0ea_50%,#6da7e2)]">
          <PreFltWindow />
        </Win>
        <Win title="FTE.MAIN -" width="ml-[1px] w-[481px]" pad="pl-[5px] pr-[7px]" bar="bg-[linear-gradient(to_right,#b0d0ee,#3b7cc0_30%,#4a83ba_60%,#88a4c2)]">
          <MainWindow />
        </Win>
      </div>
      <Dashboard />
    </div>
  );
}
